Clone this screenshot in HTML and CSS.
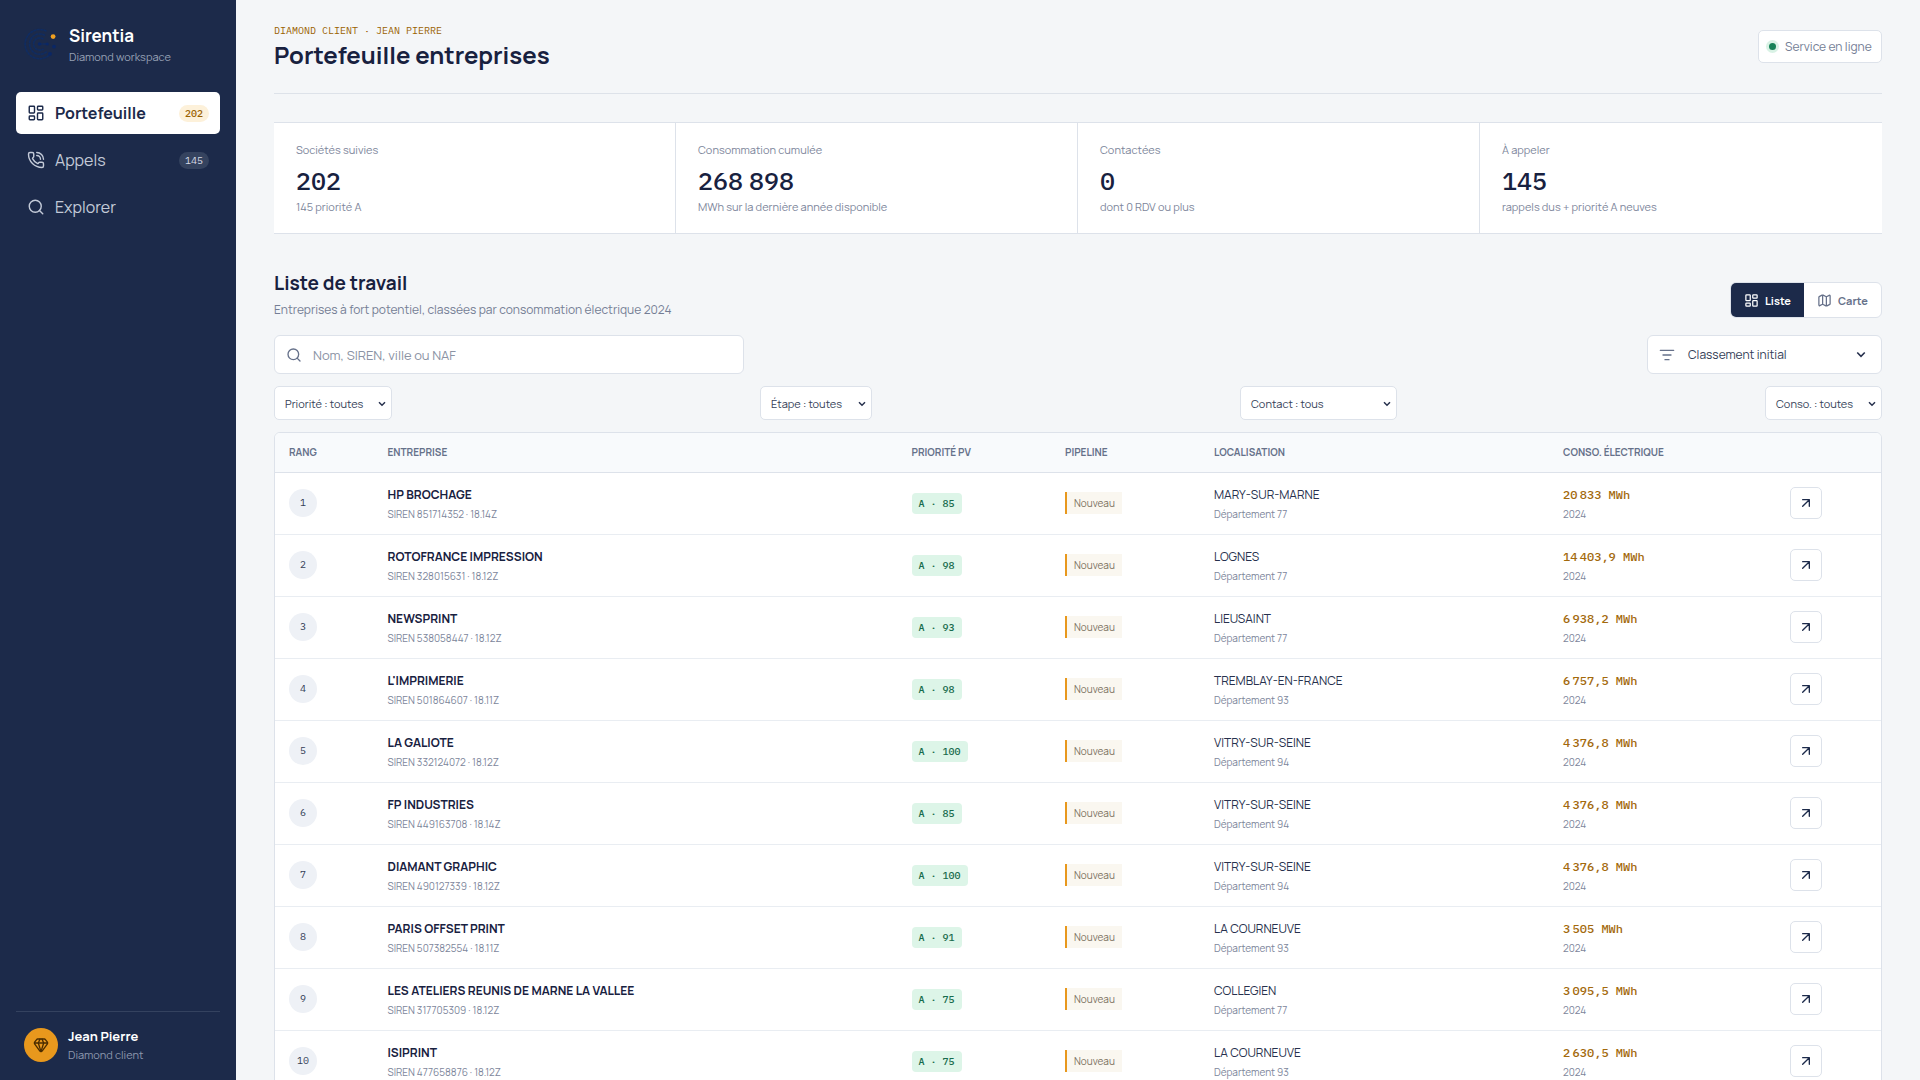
FILE: index.html
```
<!DOCTYPE html>
<html lang="fr">
<head>
<meta charset="utf-8">
<title>Sirentia</title>
<link rel="stylesheet" href="styles.css">
</head>
<body>
<svg class="defs" width="0" height="0">
  <symbol id="i-grid" viewBox="0 0 24 24"><rect x="3" y="3" width="7" height="9" rx="1"/><rect x="14" y="3" width="7" height="5" rx="1"/><rect x="14" y="12" width="7" height="9" rx="1"/><rect x="3" y="16" width="7" height="5" rx="1"/></symbol>
  <symbol id="i-phone" viewBox="0 0 24 24"><path d="M13 2a9 9 0 0 1 9 9M13 6a5 5 0 0 1 5 5"/><path d="M13.832 16.568a1 1 0 0 0 1.213-.303l.355-.465A2 2 0 0 1 17 15h3a2 2 0 0 1 2 2v3a2 2 0 0 1-2 2A18 18 0 0 1 2 4a2 2 0 0 1 2-2h3a2 2 0 0 1 2 2v3a2 2 0 0 1-.8 1.6l-.468.351a1 1 0 0 0-.292 1.233 14 14 0 0 0 6.392 6.384"/></symbol>
  <symbol id="i-search" viewBox="0 0 24 24"><circle cx="11" cy="11" r="8"/><path d="m21 21-4.34-4.34"/></symbol>
  <symbol id="i-map" viewBox="0 0 24 24"><path d="M14.106 5.553a2 2 0 0 0 1.788 0l3.659-1.83A1 1 0 0 1 21 4.619v12.764a1 1 0 0 1-.553.894l-4.553 2.277a2 2 0 0 1-1.788 0l-4.212-2.106a2 2 0 0 0-1.788 0l-3.659 1.83A1 1 0 0 1 3 19.381V6.618a1 1 0 0 1 .553-.894l4.553-2.277a2 2 0 0 1 1.788 0zM15 5.764v15M9 3.236v15"/></symbol>
  <symbol id="i-sort" viewBox="0 0 24 24"><path d="M2 5h20M6 12h12M9 19h6"/></symbol>
  <symbol id="i-gem" viewBox="0 0 24 24"><path d="M10.5 3 8 9l4 13 4-13-2.5-6"/><path d="M17 3a2 2 0 0 1 1.6.8l3 4a2 2 0 0 1 .013 2.382l-7.99 10.986a2 2 0 0 1-3.247 0l-7.99-10.986A2 2 0 0 1 2.4 7.8l2.998-3.997A2 2 0 0 1 7 3zM2 9h20"/></symbol>
  <symbol id="i-arrow" viewBox="0 0 24 24"><path d="M7 7h10v10M7 17 17 7"/></symbol>
  <symbol id="i-down" viewBox="0 0 8 6"><path d="m1 1.2 3 3 3-3"/></symbol>
</svg>
<div class="app">
  <aside class="sidebar">
    <div class="brand">
      <svg class="logo" viewBox="0 0 32 32">
        <g class="arcs"><path d="M22.5 3.2A14.6 14.6 0 1 0 26 26.5"/><path d="M21 7.4A10.2 10.2 0 1 0 23 23.3"/><path d="M19.5 11.2A6.1 6.1 0 1 0 19.5 20.8"/><path d="M15.5 16H23"/></g>
        <g class="nodes"><circle cx="15.5" cy="16" r="1.7"/><circle cx="23.2" cy="16" r="1.6"/><circle cx="30" cy="18.6" r="1.9"/><circle cx="26" cy="25.8" r="1.9"/></g>
        <circle class="spark" cx="29.1" cy="8.6" r="2.4"/>
      </svg>
      <div><div class="brand-name">Sirentia</div><div class="brand-sub">Diamond workspace</div></div>
    </div>
    <nav class="nav">
      <a class="nav-item active"><svg class="icon"><use href="#i-grid"/></svg><span>Portefeuille</span><b class="count">202</b></a>
      <a class="nav-item"><svg class="icon"><use href="#i-phone"/></svg><span>Appels</span><b class="count">145</b></a>
      <a class="nav-item"><svg class="icon"><use href="#i-search"/></svg><span>Explorer</span></a>
    </nav>
    <div class="user">
      <div class="avatar"><svg class="icon"><use href="#i-gem"/></svg></div>
      <div><div class="user-name">Jean Pierre</div><div class="user-role">Diamond client</div></div>
    </div>
  </aside>
  <main class="main">
    <header class="header">
      <div><div class="eyebrow">DIAMOND CLIENT · JEAN PIERRE</div><h1>Portefeuille entreprises</h1></div>
      <div class="status"><i class="dot"></i><span>Service en ligne</span></div>
    </header>
    <section class="kpis">
      <div class="kpi"><div class="kpi-label">Sociétés suivies</div><div class="kpi-value">202</div><div class="kpi-note">145 priorité A</div></div>
      <div class="kpi"><div class="kpi-label">Consommation cumulée</div><div class="kpi-value">268<i></i>898</div><div class="kpi-note">MWh sur la dernière année disponible</div></div>
      <div class="kpi"><div class="kpi-label">Contactées</div><div class="kpi-value">0</div><div class="kpi-note">dont 0 RDV ou plus</div></div>
      <div class="kpi"><div class="kpi-label">À appeler</div><div class="kpi-value">145</div><div class="kpi-note">rappels dus + priorité A neuves</div></div>
    </section>
    <section class="list-head">
      <div><h2>Liste de travail</h2><p>Entreprises à fort potentiel, classées par consommation électrique 2024</p></div>
      <div class="toggle"><span class="toggle-item on"><svg class="icon"><use href="#i-grid"/></svg>Liste</span><span class="toggle-item"><svg class="icon"><use href="#i-map"/></svg>Carte</span></div>
    </section>
    <div class="tools">
      <div class="search"><svg class="icon"><use href="#i-search"/></svg><span>Nom, SIREN, ville ou NAF</span></div>
      <div class="sort"><svg class="icon"><use href="#i-sort"/></svg><span>Classement initial</span><svg class="down"><use href="#i-down"/></svg></div>
    </div>
    <div class="filters">
      <div class="filter priority"><span>Priorité : toutes</span><svg class="down"><use href="#i-down"/></svg></div>
      <div class="filter stage"><span>Étape : toutes</span><svg class="down"><use href="#i-down"/></svg></div>
      <div class="filter contact"><span>Contact : tous</span><svg class="down"><use href="#i-down"/></svg></div>
      <div class="filter usage"><span>Conso. : toutes</span><svg class="down"><use href="#i-down"/></svg></div>
    </div>
    <div class="table">
      <div class="row head"><span>RANG</span><span>ENTREPRISE</span><span>PRIORITÉ PV</span><span>PIPELINE</span><span>LOCALISATION</span><span>CONSO. ÉLECTRIQUE</span><span></span></div>
      <div class="row"><div><span class="rank">1</span></div><div><div class="name">HP BROCHAGE</div><div class="siren">SIREN 851714352 · 18.14Z</div></div><div><span class="score">A · 85</span></div><div><span class="stage-tag">Nouveau</span></div><div><div class="city">MARY-SUR-MARNE</div><div class="dept">Département 77</div></div><div><div class="mwh">20<i></i>833 MWh</div><div class="year">2024</div></div><div><span class="open"><svg class="icon"><use href="#i-arrow"/></svg></span></div></div>
      <div class="row"><div><span class="rank">2</span></div><div><div class="name">ROTOFRANCE IMPRESSION</div><div class="siren">SIREN 328015631 · 18.12Z</div></div><div><span class="score">A · 98</span></div><div><span class="stage-tag">Nouveau</span></div><div><div class="city">LOGNES</div><div class="dept">Département 77</div></div><div><div class="mwh">14<i></i>403,9 MWh</div><div class="year">2024</div></div><div><span class="open"><svg class="icon"><use href="#i-arrow"/></svg></span></div></div>
      <div class="row"><div><span class="rank">3</span></div><div><div class="name">NEWSPRINT</div><div class="siren">SIREN 538058447 · 18.12Z</div></div><div><span class="score">A · 93</span></div><div><span class="stage-tag">Nouveau</span></div><div><div class="city">LIEUSAINT</div><div class="dept">Département 77</div></div><div><div class="mwh">6<i></i>938,2 MWh</div><div class="year">2024</div></div><div><span class="open"><svg class="icon"><use href="#i-arrow"/></svg></span></div></div>
      <div class="row"><div><span class="rank">4</span></div><div><div class="name">L'IMPRIMERIE</div><div class="siren">SIREN 501864607 · 18.11Z</div></div><div><span class="score">A · 98</span></div><div><span class="stage-tag">Nouveau</span></div><div><div class="city">TREMBLAY-EN-FRANCE</div><div class="dept">Département 93</div></div><div><div class="mwh">6<i></i>757,5 MWh</div><div class="year">2024</div></div><div><span class="open"><svg class="icon"><use href="#i-arrow"/></svg></span></div></div>
      <div class="row"><div><span class="rank">5</span></div><div><div class="name">LA GALIOTE</div><div class="siren">SIREN 332124072 · 18.12Z</div></div><div><span class="score">A · 100</span></div><div><span class="stage-tag">Nouveau</span></div><div><div class="city">VITRY-SUR-SEINE</div><div class="dept">Département 94</div></div><div><div class="mwh">4<i></i>376,8 MWh</div><div class="year">2024</div></div><div><span class="open"><svg class="icon"><use href="#i-arrow"/></svg></span></div></div>
      <div class="row"><div><span class="rank">6</span></div><div><div class="name">FP INDUSTRIES</div><div class="siren">SIREN 449163708 · 18.14Z</div></div><div><span class="score">A · 85</span></div><div><span class="stage-tag">Nouveau</span></div><div><div class="city">VITRY-SUR-SEINE</div><div class="dept">Département 94</div></div><div><div class="mwh">4<i></i>376,8 MWh</div><div class="year">2024</div></div><div><span class="open"><svg class="icon"><use href="#i-arrow"/></svg></span></div></div>
      <div class="row"><div><span class="rank">7</span></div><div><div class="name">DIAMANT GRAPHIC</div><div class="siren">SIREN 490127339 · 18.12Z</div></div><div><span class="score">A · 100</span></div><div><span class="stage-tag">Nouveau</span></div><div><div class="city">VITRY-SUR-SEINE</div><div class="dept">Département 94</div></div><div><div class="mwh">4<i></i>376,8 MWh</div><div class="year">2024</div></div><div><span class="open"><svg class="icon"><use href="#i-arrow"/></svg></span></div></div>
      <div class="row"><div><span class="rank">8</span></div><div><div class="name">PARIS OFFSET PRINT</div><div class="siren">SIREN 507382554 · 18.11Z</div></div><div><span class="score">A · 91</span></div><div><span class="stage-tag">Nouveau</span></div><div><div class="city">LA COURNEUVE</div><div class="dept">Département 93</div></div><div><div class="mwh">3<i></i>505 MWh</div><div class="year">2024</div></div><div><span class="open"><svg class="icon"><use href="#i-arrow"/></svg></span></div></div>
      <div class="row"><div><span class="rank">9</span></div><div><div class="name">LES ATELIERS REUNIS DE MARNE LA VALLEE</div><div class="siren">SIREN 317705309 · 18.12Z</div></div><div><span class="score">A · 75</span></div><div><span class="stage-tag">Nouveau</span></div><div><div class="city">COLLEGIEN</div><div class="dept">Département 77</div></div><div><div class="mwh">3<i></i>095,5 MWh</div><div class="year">2024</div></div><div><span class="open"><svg class="icon"><use href="#i-arrow"/></svg></span></div></div>
      <div class="row"><div><span class="rank">10</span></div><div><div class="name">ISIPRINT</div><div class="siren">SIREN 477658876 · 18.12Z</div></div><div><span class="score">A · 75</span></div><div><span class="stage-tag">Nouveau</span></div><div><div class="city">LA COURNEUVE</div><div class="dept">Département 93</div></div><div><div class="mwh">2<i></i>630,5 MWh</div><div class="year">2024</div></div><div><span class="open"><svg class="icon"><use href="#i-arrow"/></svg></span></div></div>
    </div>
  </main>
</div>
</body>
</html>
```
FILE: styles.css
```
* { box-sizing: border-box; margin: 0; padding: 0; }
:root { --mono: "IBM Plex Mono", "Liberation Mono", monospace; }
body { font-family: Manrope, Inter, sans-serif; background: #f4f6f8; color: #18213f; overflow: hidden; }
.defs { position: absolute; }
svg { display: block; flex: none; }
.icon { width: 16px; height: 16px; fill: none; stroke: currentColor; stroke-width: 2; stroke-linecap: round; stroke-linejoin: round; }
.down { width: 8px; height: 6px; fill: none; stroke: #26304d; stroke-width: 1.5; margin-left: auto; }

.app { display: flex; height: 1080px; overflow: hidden; }

/* Sidebar */
.sidebar { width: 236px; flex: none; background: #1c2a4a; padding: 24px 16px 18px; display: flex; flex-direction: column; }
.brand { display: flex; gap: 13px; height: 68px; padding-left: 8px; }
.logo { width: 32px; height: 32px; margin-top: 4px; }
.arcs { fill: none; stroke: #0f2c62; stroke-width: 1.6; stroke-dasharray: 3 .5; }
.nodes { fill: #0a2766; }
.spark { fill: #f0a020; }
.brand-name { font-size: 17px; font-weight: 700; line-height: 24px; color: #fff; }
.brand-sub { font-size: 11px; line-height: 14px; margin-top: 2px; color: #97a1b5; }
.nav { display: flex; flex-direction: column; gap: 5px; }
.nav-item { height: 42px; border-radius: 5px; padding: 0 11px; display: flex; align-items: center; gap: 10px; font-size: 16px; color: #c3cad8; }
.nav-item .icon { width: 18px; height: 18px; stroke-width: 1.9; }
.nav-item.active { background: #fff; color: #1c2a4a; font-weight: 700; }
.count { margin-left: auto; height: 17px; padding: 0 6px; border-radius: 9px; background: #35435f; color: #d5dae5; font: 400 10px/17px var(--mono); }
.active .count { background: #fdf1da; color: #9a6200; font-weight: 500; }
.user { margin-top: auto; border-top: 1px solid #34425f; padding: 16px 8px 0; display: flex; gap: 10px; }
.avatar { width: 34px; height: 34px; border-radius: 50%; background: #e8981d; color: #4a2c00; display: flex; align-items: center; justify-content: center; }
.user-name { font-size: 13px; font-weight: 700; line-height: 18px; margin-top: -1px; color: #fff; }
.user-role { font-size: 11px; line-height: 14px; margin-top: 3px; color: #8d98ae; }

/* Page */
.main { flex: 1; min-width: 0; padding: 0 38px; }
.header { height: 94px; padding-top: 24px; border-bottom: 1px solid #dde2e9; display: flex; justify-content: space-between; align-items: flex-start; }
.eyebrow { font: 400 10px/14px var(--mono); color: #9a6200; }
h1 { font-size: 24px; font-weight: 700; line-height: 30px; margin-top: 2px; }
.status { margin-top: 6px; width: 124px; height: 33px; border: 1px solid #dde2ea; border-radius: 5px; background: #fff; display: flex; align-items: center; gap: 9px; padding-left: 10px; font-size: 12px; color: #747e95; white-space: nowrap; }
.dot { width: 7px; height: 7px; border-radius: 50%; background: #178258; box-shadow: 0 0 0 3px #d9f2e5; }

.kpis { margin-top: 28px; height: 112px; border: 1px solid #dde2ea; border-width: 1px 0; background: #fff; display: grid; grid-template-columns: repeat(4, 1fr); }
.kpi { padding: 20px 22px 0; border-right: 1px solid #dde2ea; }
.kpi:last-child { border-right: 0; }
.kpi-label, .kpi-note { font-size: 11px; line-height: 14px; color: #7d869b; white-space: nowrap; }
.kpi-note { margin-top: 4px; }
.kpi-value { margin-top: 9px; font: 500 25px/30px var(--mono); }
.kpi-value i { display: inline-block; width: 6px; }

.list-head { margin-top: 37px; height: 48px; display: flex; justify-content: space-between; align-items: flex-start; }
h2 { font-size: 19px; font-weight: 700; line-height: 24px; }
.list-head p { font-size: 12px; line-height: 18px; margin-top: 6px; color: #747e95; }
.toggle { margin-top: 11px; width: 152px; height: 36px; border: 1px solid #dde2ea; border-radius: 6px; overflow: hidden; background: #fff; display: flex; font-size: 11px; font-weight: 700; }
.toggle-item { flex: 1; display: flex; align-items: center; gap: 6px; padding-left: 13px; color: #66718a; }
.toggle-item.on { flex: 0 0 73px; background: #1c2a4a; color: #fff; }
.toggle .icon { width: 15px; height: 15px; }

.tools { margin-top: 16px; display: flex; justify-content: space-between; }
.search, .sort { height: 39px; border: 1px solid #dde2ea; border-radius: 6px; background: #fff; display: flex; align-items: center; }
.search { width: 470px; padding-left: 11px; gap: 11px; font-size: 13px; color: #8b93a4; }
.search .icon, .sort .icon { color: #66718a; }
.search span { padding-top: 1px; }
.sort { width: 235px; padding: 0 15px 0 11px; gap: 13px; font-size: 12px; color: #343e57; }
.sort .down { width: 10px; height: 7.5px; stroke-width: 1.3; }
.filters { margin-top: 12px; display: flex; justify-content: space-between; }
.filter { height: 34px; border: 1px solid #dde2ea; border-radius: 5px; background: #fff; display: flex; align-items: center; padding: 1px 5px 0 10px; font-size: 11px; color: #343e57; }
.filter.priority { width: 118px; }
.filter.stage { width: 112px; }
.filter.contact { width: 157px; }
.filter.usage { width: 117px; }

/* Table */
.table { margin-top: 12px; border: 1px solid #dde2ea; border-radius: 6px; overflow: hidden; background: #fff; }
.row { height: 62px; display: grid; grid-template-columns: 98.5px 524px 153.5px 149px 349px 227px 105px; align-items: center; border-bottom: 1px solid #e9edf2; }
.row > * { padding-left: 14px; }
.row.head { height: 40px; padding-bottom: 1px; background: #f8fafc; border-color: #dde2ea; font-size: 10px; font-weight: 700; color: #66718a; }
.rank { width: 28px; height: 28px; border-radius: 50%; background: #eef1f6; display: block; margin-bottom: 1px; text-align: center; font: 400 10px/28px var(--mono); color: #343e57; }
.name, .city { font-size: 12px; line-height: 16px; padding-top: 1px; white-space: nowrap; height: 17px; }
.name { font-weight: 700; }
.city { color: #26304d; }
.siren, .dept, .year { font-size: 10px; line-height: 14px; margin-top: 4px; color: #7d869b; }
.score { display: inline-block; vertical-align: top; height: 21px; padding: 0 7px; border-radius: 4px; background: #ddf5e8; color: #176b4c; font: 500 10px/21px var(--mono); }
.stage-tag { display: inline-block; vertical-align: top; height: 22px; margin-bottom: 1px; padding: 0 7px; border-left: 2px solid #e8981d; background: #faf7f0; color: #7d7362; font-size: 10px; line-height: 22px; }
.mwh { font: 500 12px/16px var(--mono); color: #a3690c; height: 18px; }
.mwh i { display: inline-block; width: 2.4px; }
.year { margin-top: 2px; }
.open { width: 32px; height: 32px; margin-bottom: 1px; border: 1px solid #dde2ea; border-radius: 5px; display: flex; align-items: center; justify-content: center; color: #1c2a4a; }
```
